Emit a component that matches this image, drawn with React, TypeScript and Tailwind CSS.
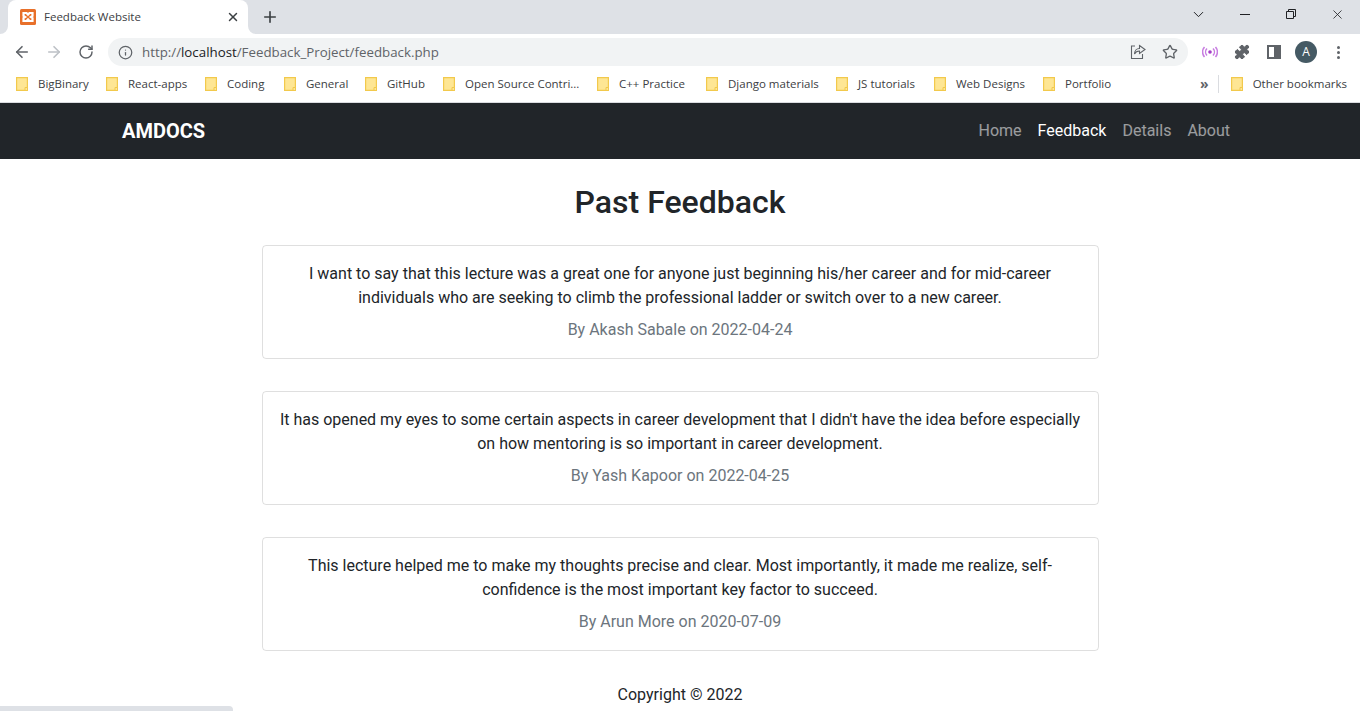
import { ArrowLeft, ArrowRight, ChevronDown, Info, Plus, Puzzle, RotateCw, Star, X } from "lucide-react";

type Bookmark = {
  readonly label: string;
  readonly width: string;
};

type Feedback = {
  readonly text: string;
  readonly by: string;
};

const CHROME_FONT = "font-['Open_Sans','Noto_Sans',sans-serif]";

const BOOKMARKS: Bookmark[] = [
  { label: "BigBinary", width: "w-[90px]" },
  { label: "React-apps", width: "w-[99px]" },
  { label: "Coding", width: "w-[79px]" },
  { label: "General", width: "w-[81px]" },
  { label: "GitHub", width: "w-[78px]" },
  { label: "Open Source Contri...", width: "w-[154px]" },
  { label: "C++ Practice", width: "w-[109px]" },
  { label: "Django materials", width: "w-[130px]" },
  { label: "JS tutorials", width: "w-[98px]" },
  { label: "Web Designs", width: "w-[109px]" },
  { label: "Portfolio", width: "w-[90px]" },
];

const FEEDBACKS: Feedback[] = [
  {
    text: "I want to say that this lecture was a great one for anyone just beginning his/her career and for mid-career individuals who are seeking to climb the professional ladder or switch over to a new career.",
    by: "By Akash Sabale on 2022-04-24",
  },
  {
    text: "It has opened my eyes to some certain aspects in career development that I didn't have the idea before especially on how mentoring is so important in career development.",
    by: "By Yash Kapoor on 2022-04-25",
  },
  {
    text: "This lecture helped me to make my thoughts precise and clear. Most importantly, it made me realize, self-confidence is the most important key factor to succeed.",
    by: "By Arun More on 2020-07-09",
  },
];

const FolderIcon = () => (
  <svg width="12" height="14" viewBox="0 0 12 14" className="shrink-0">
    <path d="M.6.6h10.8v12.8H.6z" fill="#fee694" stroke="#f2c94c" strokeWidth="1.2" />
    <path d="M9 10.5h2.5v3H9z" fill="#fee694" stroke="#f2c94c" strokeWidth="1" />
  </svg>
);

const XamppIcon = () => (
  <svg width="16" height="16" viewBox="0 0 16 16" className="shrink-0">
    <rect width="16" height="16" rx="1.5" fill="#e8702a" />
    <path
      d="M3.5 4h3L8 5.6 9.5 4h3v3l-1.6 1 1.6 1v3h-3L8 10.4 6.5 12h-3V9l1.6-1-1.6-1z"
      fill="none"
      stroke="#fff"
      strokeWidth="2.2"
    />
  </svg>
);

const TabStrip = () => (
  <div className="flex h-[34px] items-end justify-between bg-[#dee1e6]">
    <div className="flex items-center">
      <div className="relative ml-2 flex h-[34px] w-[240px] items-center rounded-t-lg bg-white pl-3 pr-2">
        <svg width="8" height="8" viewBox="0 0 8 8" className="absolute bottom-0 -left-2">
          <path d="M8 0v8H0a8 8 0 0 0 8-8z" fill="#fff" />
        </svg>
        <svg width="8" height="8" viewBox="0 0 8 8" className="absolute bottom-0 -right-2">
          <path d="M0 0v8h8a8 8 0 0 1-8-8z" fill="#fff" />
        </svg>
        <XamppIcon />
        <span className="ml-2 flex-1 text-[11.5px] text-[#3c4043]">Feedback Website</span>
        <X size={14} strokeWidth={2.5} className="-ml-1 text-[#3c4043]" />
      </div>
      <Plus size={18} strokeWidth={2.2} className="ml-[13px] text-[#3c4043]" />
    </div>
    <div className="flex h-[28px] items-center self-start text-[#202124]">
      <ChevronDown size={17} strokeWidth={1.4} className="mr-[33px]" />
      <div className="mr-[36px] h-px w-[10px] bg-[#202124]" />
      <svg width="10" height="10" viewBox="0 0 10 10" fill="none" stroke="#202124" className="mr-[34px]">
        <path d="M.5 2.5h7v7h-7zM2.5 2.5v-2h7v7h-2" />
      </svg>
      <X size={15} strokeWidth={1.3} className="mr-[15px]" />
    </div>
  </div>
);

const ShareIcon = () => (
  <svg width="16" height="16" viewBox="0 0 16 16" fill="none" stroke="#5f6368" strokeWidth="1.1">
    <path d="M5 2H1.5v12.5h11V10" />
    <path d="M9.5 1.5 15 5.5 9.5 9.5V7C7 7 5.5 8 4.5 10c0-3 2-5.5 5-5.5z" />
  </svg>
);

const Toolbar = () => (
  <div className="flex h-[36px] items-center bg-white">
    <ArrowLeft size={18} strokeWidth={2.2} className="ml-[13px] text-[#5f6368]" />
    <ArrowRight size={18} strokeWidth={2.2} className="ml-[14px] text-[#bdc1c6]" />
    <RotateCw size={16} strokeWidth={2.2} className="ml-[15px] text-[#5f6368]" />
    <div className="ml-[14px] flex h-[28px] w-[1080px] items-center rounded-full bg-[#f1f3f4] pl-[10px] pr-[10px]">
      <Info size={15} strokeWidth={2} className="text-[#5f6368]" />
      <span className="ml-[9px] flex-1 text-[13.3px] text-[#5f6368]">
        http://<span className="text-[#202124]">localhost</span>/Feedback_Project/feedback.php
      </span>
      <ShareIcon />
      <Star size={16} strokeWidth={2} className="ml-[16px] text-[#5f6368]" />
    </div>
    <svg width="16" height="16" viewBox="0 0 16 16" fill="none" stroke="#c77de0" strokeWidth="1.5" className="ml-[14px]">
      <circle cx="8" cy="8" r="1.8" fill="#a63cc8" stroke="none" />
      <path d="M5 4.5a5 5 0 0 0 0 7M11 4.5a5 5 0 0 1 0 7M2.5 3a7.5 7.5 0 0 0 0 10M13.5 3a7.5 7.5 0 0 1 0 10" />
    </svg>
    <Puzzle size={16} fill="#5f6368" strokeWidth={1.5} className="ml-[16px] text-[#5f6368]" />
    <div className="ml-[17px] flex h-[14px] w-[14px] justify-end border-2 border-[#5f6368]">
      <div className="h-full w-[5px] bg-[#5f6368]" />
    </div>
    <div className="ml-[14px] flex h-[22px] w-[22px] items-center justify-center rounded-full bg-[#455a64] text-xs text-white">
      A
    </div>
    <div className="ml-[20px] flex flex-col gap-[2px]">
      <div className="h-[3px] w-[3px] rounded-full bg-[#5f6368]" />
      <div className="h-[3px] w-[3px] rounded-full bg-[#5f6368]" />
      <div className="h-[3px] w-[3px] rounded-full bg-[#5f6368]" />
    </div>
  </div>
);

const BookmarksBar = () => (
  <div className="flex h-[33px] items-center border-b border-[#dadce0] bg-white pb-1 pl-4 text-[11.5px] text-[#3c4043]">
    {BOOKMARKS.map((bookmark) => (
      <div key={bookmark.label} className={`flex shrink-0 items-center gap-[10px] ${bookmark.width}`}>
        <FolderIcon />
        <span className="whitespace-nowrap">{bookmark.label}</span>
      </div>
    ))}
    <span className="ml-[67px] text-sm leading-none font-bold text-[#5f6368]">»</span>
    <div className="ml-[9px] h-[18px] w-px bg-[#dadce0]" />
    <div className="ml-[12px] flex items-center gap-[10px]">
      <FolderIcon />
      <span className="whitespace-nowrap">Other bookmarks</span>
    </div>
  </div>
);

const Navbar = () => (
  <nav className="bg-[#212529]">
    <div className="mx-auto flex h-14 w-[1140px] items-center justify-between px-3">
      <span className="text-xl font-bold text-white">AMDOCS</span>
      <div className="flex">
        <a className="px-2 text-white/55">Home</a>
        <a className="px-2 text-white">Feedback</a>
        <a className="px-2 text-white/55">Details</a>
        <a className="px-2 text-white/55">About</a>
      </div>
    </div>
  </nav>
);

const FeedbackCard = ({ text, by }: Feedback) => (
  <div className="mb-8 rounded border border-black/[0.125] p-4 text-center">
    <p className="mb-2">{text}</p>
    <p className="text-[#6c757d]">{by}</p>
  </div>
);

export default function App() {
  return (
    <div className="relative h-[711px] overflow-hidden bg-white font-['Roboto',sans-serif] text-base leading-6 text-[#212529]">
      <div className={CHROME_FONT}>
        <TabStrip />
        <Toolbar />
        <BookmarksBar />
      </div>
      <Navbar />
      <h1 className="mt-6 mb-6 text-center text-[32px] leading-[38.4px] font-medium">Past Feedback</h1>
      <div className="mx-auto w-[837px]">
        {FEEDBACKS.map((feedback) => (
          <FeedbackCard key={feedback.by} {...feedback} />
        ))}
      </div>
      <p className="text-center">Copyright © 2022</p>
      <div className="absolute bottom-0 left-0 h-[5px] w-[233px] rounded-tr bg-[#dee1e6]" />
    </div>
  );
}
